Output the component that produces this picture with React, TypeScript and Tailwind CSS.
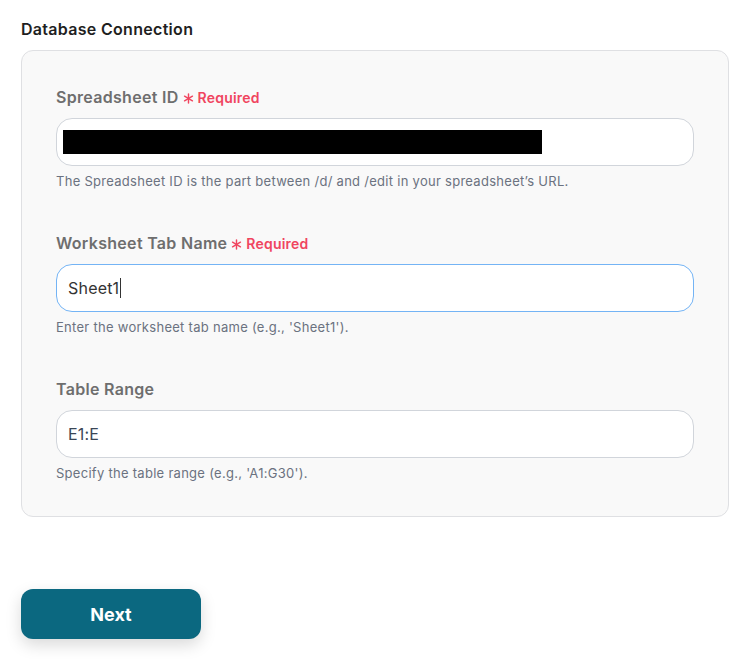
import React from "react";

function Asterisk() {
  return (
    <svg width="11" height="11" viewBox="0 0 12 12" className="mr-[4px] mt-[2px]" fill="none" stroke="#f0455f" strokeWidth="1.6" strokeLinecap="round">
      <line x1="6" y1="1" x2="6" y2="11" />
      <line x1="1.7" y1="3.5" x2="10.3" y2="8.5" />
      <line x1="1.7" y1="8.5" x2="10.3" y2="3.5" />
    </svg>
  );
}

function Label({ text, required }: { text: string; required?: boolean }) {
  return (
    <div className="flex items-center h-[22px]">
      <span className="text-[16px] leading-[22px] font-semibold text-[#6e6e6e] tracking-[0.3px]">{text}</span>
      {required && (
        <span className="flex items-center ml-[4px] text-[14px] font-semibold text-[#f0455f] tracking-[0.2px]">
          <Asterisk />
          Required
        </span>
      )}
    </div>
  );
}

export default function App() {
  return (
    <div className="w-[754px] h-[659px] bg-white px-[21px] pt-[19px]" style={{ fontFamily: "Inter, 'Noto Sans', sans-serif" }}>
      <div className="text-[16px] leading-[20px] font-semibold text-[#1f1f1f] tracking-[0.3px]">Database Connection</div>
      <div className="mt-[11px] w-[708px] rounded-[12px] border border-[#dfe0e3] bg-[#f9f9f9] pl-[34px] pr-[34px] pt-[35px] pb-[34px]">
        <Label text="Spreadsheet ID" required />
        <div className="mt-[10px] h-[48px] rounded-[16px] border border-[#d1d5db] bg-white flex items-center pl-[6px]">
          <div className="w-[479px] h-[24px] bg-black" />
        </div>
        <div className="mt-[6px] text-[13px] leading-[18px] text-[#6b7280] tracking-[0.28px]">
          The Spreadsheet ID is the part between /d/ and /edit in your spreadsheet’s URL.
        </div>

        <div className="mt-[42px]">
          <Label text="Worksheet Tab Name" required />
        </div>
        <div className="mt-[10px] h-[48px] rounded-[16px] border border-[#74b4f5] bg-white flex items-center pl-[11px]">
          <span className="text-[16px] text-[#333333] tracking-[0.2px]">Sheet1</span>
          <span className="w-[1px] h-[20px] bg-[#333333] ml-[1px]" />
        </div>
        <div className="mt-[6px] text-[13px] leading-[18px] text-[#6b7280] tracking-[0.28px]">
          Enter the worksheet tab name (e.g., 'Sheet1').
        </div>

        <div className="mt-[42px]">
          <Label text="Table Range" />
        </div>
        <div className="mt-[10px] h-[48px] rounded-[16px] border border-[#d1d5db] bg-white flex items-center pl-[11px]">
          <span className="text-[16px] text-[#3a4656] tracking-[0.2px]">E1:E</span>
        </div>
        <div className="mt-[6px] text-[13px] leading-[18px] text-[#6b7280] tracking-[0.28px]">
          Specify the table range (e.g., 'A1:G30').
        </div>
      </div>

      <button className="mt-[72px] w-[180px] h-[50px] rounded-[12px] bg-[#0b6880] text-white text-[18px] font-bold shadow-[0_6px_16px_rgba(0,0,0,0.15)] flex items-center justify-center">
        Next
      </button>
    </div>
  );
}
